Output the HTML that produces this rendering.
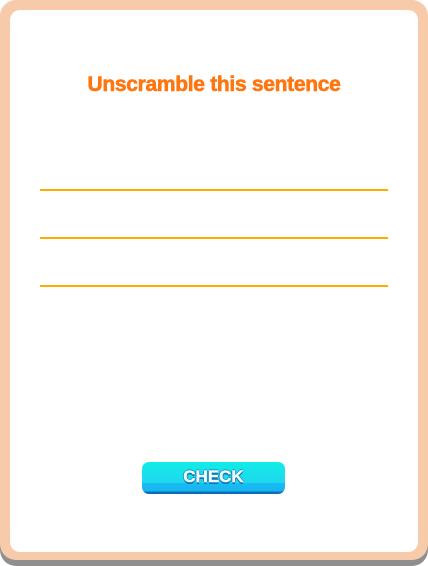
<!DOCTYPE html>
<html><head><style>
html,body{margin:0;padding:0;width:428px;height:566px;background:#fff;overflow:hidden}
.shadow{position:absolute;left:0;top:6px;width:428px;height:560px;background:#8f8f8f;border-radius:16px}
.frame{position:absolute;left:0;top:0;width:428px;height:560px;background:#f7cba9;border-radius:16px}
.inner{position:absolute;left:10px;top:10px;width:408px;height:542px;background:#fff;border-radius:10px}
.title{position:absolute;left:0;width:428px;top:73px;text-align:center;font-family:"Liberation Sans",sans-serif;font-weight:bold;font-size:21px;color:#ff7610;letter-spacing:-0.3px;-webkit-text-stroke:0.6px #ff7610}
.line{position:absolute;left:40px;width:348px;height:2px;background:#ffab00}
.btn{position:absolute;left:142px;top:462px;width:143px;height:32px;border-radius:7px;overflow:hidden;background:linear-gradient(#12ece6 0%,#1fd8ee 65%,#18bdf2 66%,#18b4f0 92%,#0b6fb8 93%)}
.btn span{position:absolute;left:0;right:0;top:5px;text-align:center;font-family:"Liberation Sans",sans-serif;font-weight:bold;font-size:17px;color:#e8ffff;-webkit-text-stroke:0.5px #e8ffff;text-shadow:-1px 0 #1670b0,1px 0 #1670b0,0 -1px #1670b0,0 2px #1670b0}
</style></head><body>
<div class="shadow"></div>
<div class="frame"></div>
<div class="inner"></div>
<div class="title">Unscramble this sentence</div>
<div class="line" style="top:189px"></div>
<div class="line" style="top:237px"></div>
<div class="line" style="top:285px"></div>
<div class="btn"><span>CHECK</span></div>
</body></html>
